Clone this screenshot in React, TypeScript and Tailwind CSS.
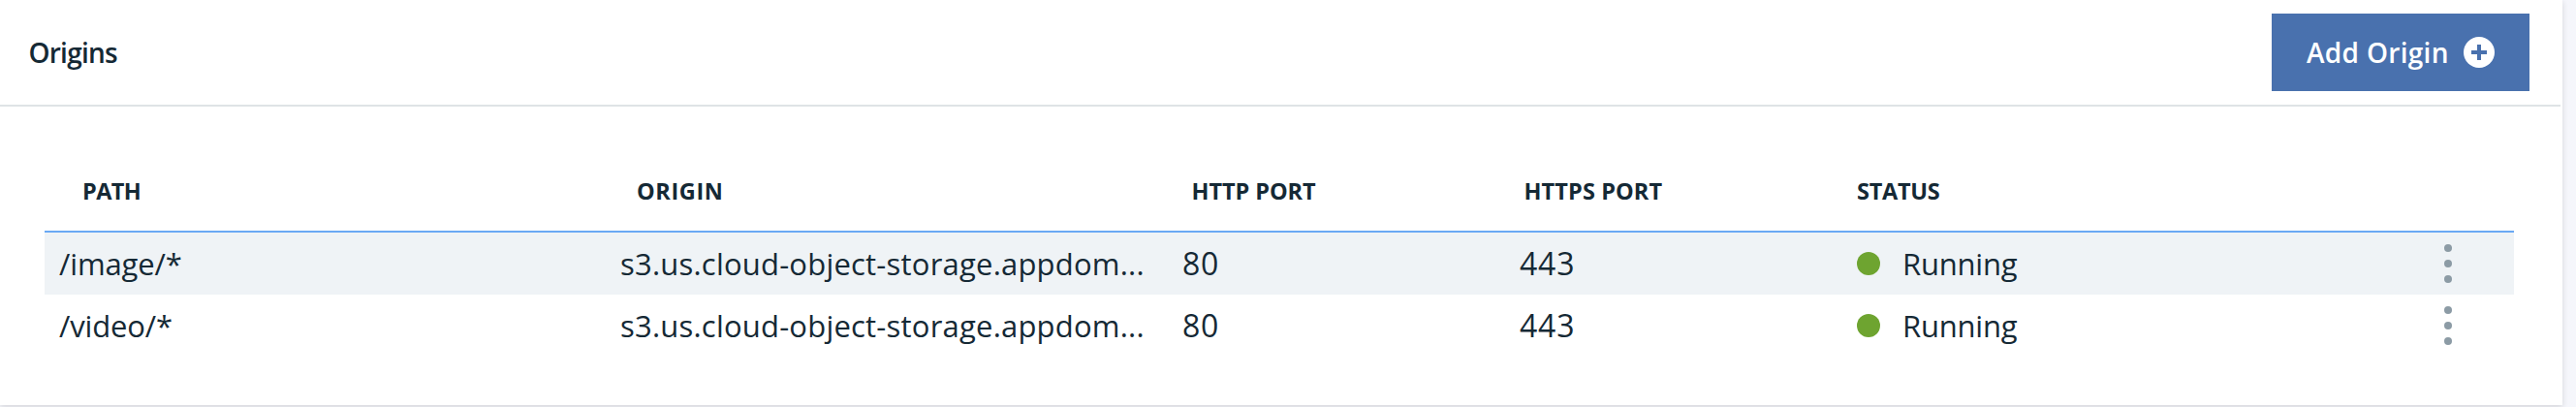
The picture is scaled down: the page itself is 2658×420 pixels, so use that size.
import React from "react";

type Origin = { path: string; host: string; http: string; https: string; status: string };

const origins: Origin[] = [
  { path: "/image/*", host: "s3.us.cloud-object-storage.appdom...", http: "80", https: "443", status: "Running" },
  { path: "/video/*", host: "s3.us.cloud-object-storage.appdom...", http: "80", https: "443", status: "Running" },
];

const columns = "grid grid-cols-[579px_579px_348px_348px_694px] items-center whitespace-nowrap";

function AddIcon() {
  return (
    <svg className="size-8" viewBox="0 0 32 32" aria-hidden="true">
      <circle cx="16" cy="16" r="16" fill="#fff" />
      <path d="M14 8h4v6h6v4h-6v6h-4v-6H8v-4h6z" fill="#4971ae" />
    </svg>
  );
}

function OverflowIcon() {
  return (
    <svg className="h-10 w-2" viewBox="0 0 8 40" fill="#8c9ba5" aria-hidden="true">
      <circle cx="4" cy="4" r="4" />
      <circle cx="4" cy="20" r="4" />
      <circle cx="4" cy="36" r="4" />
    </svg>
  );
}

function Row({ origin, striped }: { origin: Origin; striped: boolean }) {
  return (
    <div className={`${columns} h-16 text-[31px] leading-[64px] ${striped ? "bg-[#eff3f6]" : ""}`}>
      <div className="pl-[15px] tracking-[-0.15px]">{origin.path}</div>
      <div className="pl-[15px] tracking-[0.21px]">{origin.host}</div>
      <div className="pl-4 text-[32px] tracking-[0.8px]">{origin.http}</div>
      <div className="pl-4 text-[32px] tracking-[0.8px]">{origin.https}</div>
      <div className="flex items-center justify-between pr-16 pl-4">
        <div className="flex items-center gap-[23px]">
          <span className="size-6 rounded-full bg-[#6ea430]" />
          <span className="tracking-[-0.2px]">{origin.status}</span>
        </div>
        <button aria-label="Options">
          <OverflowIcon />
        </button>
      </div>
    </div>
  );
}

export default function App() {
  return (
    <div className="h-[420px] overflow-hidden bg-[#f5f6fb] font-['Open_Sans',sans-serif] text-[#152935]">
      <section className="h-[418px] w-[2644px] bg-white shadow-[0_2px_6px_rgba(0,0,0,0.14)]">
        <header className="flex h-[110px] w-[2642px] items-center justify-between border-b-2 border-[#dfe3e6] pr-8 pl-[29.5px]">
          <h2 className="text-[28px] leading-9 font-semibold tracking-[-0.757px]">Origins</h2>
          <button className="flex h-20 w-[266px] items-center justify-between bg-[#4971ae] px-9 text-white">
            <span className="text-[28px] leading-9 font-semibold tracking-[0.311px]">Add Origin</span>
            <AddIcon />
          </button>
        </header>
        <div className="mt-[46px] ml-[46px] w-[2548px]">
          <div className={`${columns} h-[84px] border-b-2 border-[#6aa9f4] pt-[2px] text-[23.5px] font-bold`}>
            <div className="pl-[39px] tracking-[-0.6px]">PATH</div>
            <div className="pl-[32px] tracking-[0.6px]">ORIGIN</div>
            <div className="pl-[25.5px] tracking-[-0.067px]">HTTP PORT</div>
            <div className="pl-[20.5px] tracking-[0.114px]">HTTPS PORT</div>
            <div className="pl-4 tracking-[-0.267px]">STATUS</div>
          </div>
          {origins.map((origin, i) => (
            <Row key={origin.path} origin={origin} striped={i % 2 === 0} />
          ))}
        </div>
      </section>
    </div>
  );
}
